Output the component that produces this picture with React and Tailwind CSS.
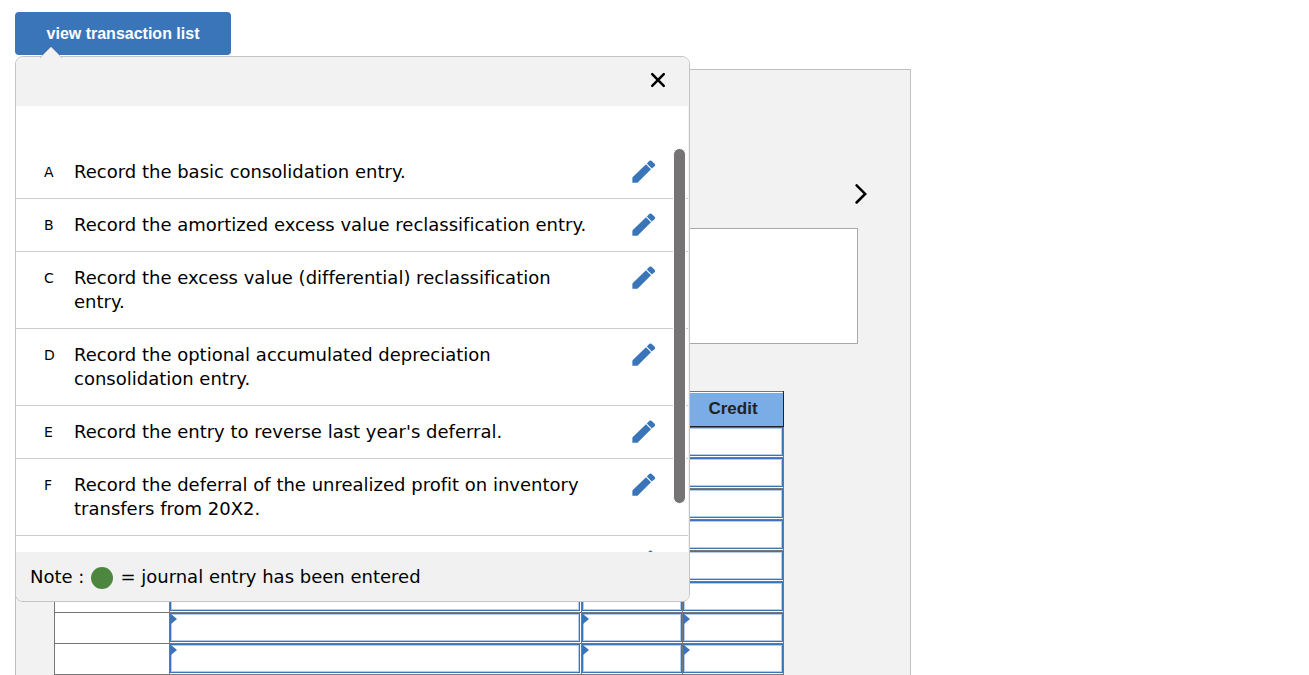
import { useState } from 'react';

const transactions = [
  { id: 'A', text: 'Record the basic consolidation entry.' },
  { id: 'B', text: 'Record the amortized excess value reclassification entry.' },
  { id: 'C', text: 'Record the excess value (differential) reclassification entry.' },
  { id: 'D', text: 'Record the optional accumulated depreciation consolidation entry.' },
  { id: 'E', text: "Record the entry to reverse last year's deferral." },
  { id: 'F', text: 'Record the deferral of the unrealized profit on inventory transfers from 20X2.' },
  { id: '', text: '' },
];

const rows = [1, 2, 3, 4, 5, 6, 7, 8];

function PencilIcon() {
  return (
    <svg width="24" height="24" viewBox="0 0 24 24" fill="#3a75ba" aria-hidden="true">
      <path d="M0.4 18 Q0.4 17.4 0.8 17 L14 4.2 L19 9.2 L6 22.3 Q5.5 22.8 4.9 22.8 H0.4 Z" />
      <path d="M14.8 3.4 L17.5 0.8 Q18.5 0 19.5 0.8 L22.8 4.1 Q23.6 5 22.8 6 L19.8 8.4 Z" />
    </svg>
  );
}

function CloseIcon() {
  return (
    <svg width="16" height="16" viewBox="0 0 16 16" fill="none" stroke="#000" strokeWidth="2.5" strokeLinecap="round" aria-hidden="true">
      <path d="M2.2 2.2 L13.8 13.8 M13.8 2.2 L2.2 13.8" />
    </svg>
  );
}

function ChevronIcon() {
  return (
    <svg width="12" height="20" viewBox="0 0 12 20" fill="none" stroke="#000" strokeWidth="2.5" strokeLinecap="round" aria-hidden="true">
      <path d="M1.6 1.3 L10.2 9.9 L1.6 18.5" />
    </svg>
  );
}

function EntryCell({ label, gap }) {
  return (
    <td className={gap ? 'border border-[#777] p-0 pb-px pr-px' : 'border border-[#777] p-0 pb-px'}>
      <div className="relative h-[29px] border border-[#3a75ba]">
        <input aria-label={label} className="block h-full w-full border border-[#b3cceb] bg-white px-2 text-sm outline-none" />
        <svg className="absolute left-0 top-0" width="6" height="12" viewBox="0 0 6 12" fill="#3a75ba" aria-hidden="true">
          <path d="M0 0 L6 5 L0 10 Z" />
        </svg>
      </div>
    </td>
  );
}

function JournalTable() {
  return (
    <table className="w-full table-fixed border-collapse bg-white font-['Liberation_Sans',sans-serif]">
      <colgroup>
        <col className="w-[115px]" />
        <col />
        <col className="w-[101px]" />
        <col className="w-[101px]" />
      </colgroup>
      <thead>
        <tr className="text-[17px] text-[#222]">
          <th className="border border-[#777]" />
          <th className="border border-[#777]" />
          <th className="border border-[#777]" />
          <th className="border border-[#222] border-t-[#777] p-0 pt-px">
            <div className="h-[33px] bg-[#7aace6] leading-8">Credit</div>
          </th>
        </tr>
      </thead>
      <tbody>
        {rows.map((n) => (
          <tr key={n}>
            <td className="border border-[#777]" />
            <EntryCell label={`Account ${n}`} gap />
            <EntryCell label={`Debit ${n}`} />
            <EntryCell label={`Credit ${n}`} />
          </tr>
        ))}
      </tbody>
    </table>
  );
}

function TransactionPopup({ onClose }) {
  return (
    <div className="absolute left-0 top-full z-10 mt-px w-[675px]">
      <svg className="absolute -top-2.5 left-6" width="24" height="12" viewBox="0 0 24 12" aria-hidden="true">
        <path d="M1 12 L12 1 L23 12" fill="#f2f2f2" stroke="#c4c4c4" />
      </svg>
      <div className="overflow-hidden rounded-lg border border-[#c4c4c4] bg-white">
        <div className="flex h-[49px] items-center justify-end bg-[#f2f2f2] px-[23px] pb-1">
          <button type="button" aria-label="Close" onClick={onClose}>
            <CloseIcon />
          </button>
        </div>
        <div className="border-r border-[#f2f2f2] pt-10">
          <div className="relative h-[406px] overflow-hidden">
            <ul>
              {transactions.map(({ id, text }) => (
                <li key={id} className="flex border-b border-[#ccc] py-3.5 pl-7 pr-8">
                  <span className="w-[30px] shrink-0 text-sm leading-6">{id}</span>
                  <span className="min-h-6 max-w-[520px] text-lg leading-6 [font-variant-ligatures:none]">{text}</span>
                  <button type="button" aria-label={`Edit entry ${id}`} className="ml-auto h-6 shrink-0">
                    <PencilIcon />
                  </button>
                </li>
              ))}
            </ul>
            <div className="absolute right-0.5 top-0.5 h-[356px] w-[13px] rounded-full border border-white bg-[#757374]" />
          </div>
        </div>
        <p className="flex h-[49px] items-center bg-[#f1f1f1] pl-3.5 text-lg">
          Note :
          <span className="mx-[7px] mt-0.5 size-[22px] rounded-full bg-[#4d863f]" />
          = journal entry has been entered
        </p>
      </div>
    </div>
  );
}

export default function App() {
  const [open, setOpen] = useState(true);

  return (
    <div className="h-screen overflow-hidden bg-white px-[15px] pt-3 font-['DejaVu_Sans',sans-serif] text-black">
      <div className="relative">
        <button
          type="button"
          onClick={() => setOpen(!open)}
          className="block h-[43px] w-54 rounded bg-[#3a75ba] font-['Liberation_Sans',sans-serif] text-base font-bold text-white"
        >
          view transaction list
        </button>
        {open && <TransactionPopup onClose={() => setOpen(false)} />}
      </div>

      <main className="mt-3.5 min-h-screen max-w-[896px] border border-[#c0c0c0] bg-[#f2f2f2] pl-[38px]">
        <div className="flex justify-end pr-[43px] pt-[114px]">
          <button type="button" aria-label="Next entry">
            <ChevronIcon />
          </button>
        </div>
        <div className="mr-[52px] mt-6 h-[116px] border border-[#aaa] bg-white" />
        <div className="mr-[126px] mt-[47px]">
          <JournalTable />
        </div>
      </main>
    </div>
  );
}
